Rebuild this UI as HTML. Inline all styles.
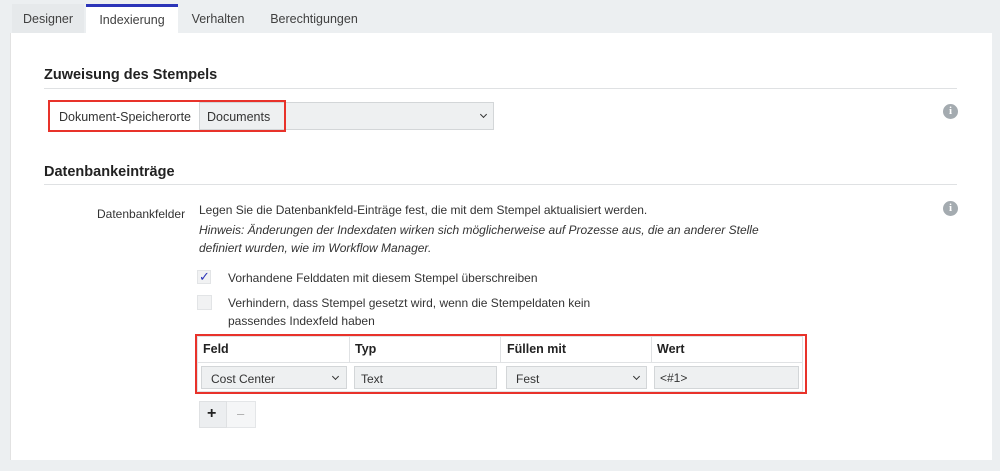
<!DOCTYPE html>
<html><head><meta charset="utf-8"><style>
*{box-sizing:border-box;margin:0;padding:0}
body{width:1000px;height:471px;background:#eceff1;font-family:"Liberation Sans",sans-serif;font-size:12px;color:#333;position:relative;overflow:hidden}
.a{position:absolute;white-space:nowrap}
.tab{position:absolute;top:4px;height:29px;line-height:30px;font-size:12.5px;color:#404040;text-align:center}
.panel{position:absolute;left:10px;top:33px;width:982px;height:427px;background:#fff;border-left:1px solid #e2e2e2}
h2{position:absolute;font-size:14.5px;font-weight:bold;color:#222}
.line{position:absolute;height:1px;background:#dfe1e3}
.info{position:absolute;width:15px;height:15px;border-radius:50%;background:#a4abb0;color:#fff;font:bold 11px "Liberation Serif",serif;text-align:center;line-height:15px}
.box{position:absolute;background:#eef0f1;border:1px solid #d3d6d8}
.red{position:absolute;border:2px solid #e8322a}
.chev{position:absolute;width:5px;height:5px;border-right:1.5px solid #333;border-bottom:1.5px solid #333;transform:rotate(45deg)}
.th{position:absolute;top:342px;font-weight:bold;font-size:12.5px;color:#222}
</style></head><body>
<div class="tab" style="left:12px;width:72px;background:#e6e9eb">Designer</div>
<div class="tab" style="left:86px;width:92px;background:#fff;border-top:3px solid #2b34b8;line-height:26px;height:30px">Indexierung</div>
<div class="tab" style="left:180px;width:76px">Verhalten</div>
<div class="tab" style="left:258px;width:112px">Berechtigungen</div>
<div class="panel"></div>

<h2 style="left:44px;top:67px">Zuweisung des Stempels</h2>
<div class="line" style="left:44px;top:88px;width:913px"></div>
<div class="box" style="left:199px;top:102px;width:295px;height:28px"></div>
<div class="a" style="left:207px;top:110px;font-size:12.5px">Documents</div>
<div class="chev" style="left:481px;top:112px"></div>
<div class="a" style="left:59px;top:110px;font-size:12.5px">Dokument-Speicherorte</div>
<div class="red" style="left:48px;top:100px;width:238px;height:32px"></div>
<div class="info" style="left:943px;top:104px">i</div>

<h2 style="left:44px;top:164px">Datenbankeinträge</h2>
<div class="line" style="left:44px;top:184px;width:913px"></div>
<div class="info" style="left:943px;top:201px">i</div>
<div class="a" style="left:97px;top:207px">Datenbankfelder</div>
<div class="a" style="left:199px;top:203px">Legen Sie die Datenbankfeld-Einträge fest, die mit dem Stempel aktualisiert werden.</div>
<div class="a" style="left:199px;top:223px;font-style:italic">Hinweis: Änderungen der Indexdaten wirken sich möglicherweise auf Prozesse aus, die an anderer Stelle</div>
<div class="a" style="left:199px;top:241px;font-style:italic">definiert wurden, wie im Workflow Manager.</div>
<div class="box" style="left:197px;top:270px;width:14px;height:14px;background:#f1f2f3;border-color:#e2e4e6"></div>
<div class="a" style="left:199px;top:269px;color:#2b34b8;font-size:13px">✓</div>
<div class="a" style="left:228px;top:271px">Vorhandene Felddaten mit diesem Stempel überschreiben</div>
<div class="box" style="left:197px;top:295px;width:15px;height:15px;background:#f1f2f3;border-color:#e2e4e6"></div>
<div class="a" style="left:228px;top:296px">Verhindern, dass Stempel gesetzt wird, wenn die Stempeldaten kein</div>
<div class="a" style="left:228px;top:314px">passendes Indexfeld haben</div>

<div class="a" style="left:197px;top:336px;width:606px;height:56px;border:1px solid #e0e2e4"></div>
<div class="a" style="left:198px;top:362px;width:604px;height:1px;background:#e0e2e4"></div>
<div class="a" style="left:349px;top:336px;width:1px;height:26px;background:#e0e2e4"></div>
<div class="a" style="left:500px;top:336px;width:1px;height:26px;background:#e0e2e4"></div>
<div class="a" style="left:651px;top:336px;width:1px;height:26px;background:#e0e2e4"></div>
<div class="th" style="left:203px">Feld</div>
<div class="th" style="left:355px">Typ</div>
<div class="th" style="left:507px">Füllen mit</div>
<div class="th" style="left:657px">Wert</div>
<div class="box" style="left:201px;top:366px;width:146px;height:23px"></div>
<div class="a" style="left:211px;top:372px">Cost Center</div>
<div class="chev" style="left:333px;top:374px"></div>
<div class="box" style="left:354px;top:366px;width:143px;height:23px"></div>
<div class="a" style="left:361px;top:372px">Text</div>
<div class="box" style="left:506px;top:366px;width:141px;height:23px"></div>
<div class="a" style="left:516px;top:372px">Fest</div>
<div class="chev" style="left:634px;top:374px"></div>
<div class="box" style="left:654px;top:366px;width:145px;height:23px"></div>
<div class="a" style="left:660px;top:371px">&lt;#1&gt;</div>
<div class="red" style="left:195px;top:334px;width:612px;height:60px"></div>

<div class="box" style="left:199px;top:401px;width:57px;height:27px;background:#f5f6f7;border-color:#e4e6e8"></div>
<div class="a" style="left:199px;top:401px;width:28px;height:27px;background:#eceef0;border:1px solid #dfe1e3"></div>
<div class="a" style="left:207px;top:405px;font-size:16px;font-weight:bold;color:#222">+</div>
<div class="a" style="left:237px;top:406px;font-size:13px;color:#aaa">–</div>
</body></html>
